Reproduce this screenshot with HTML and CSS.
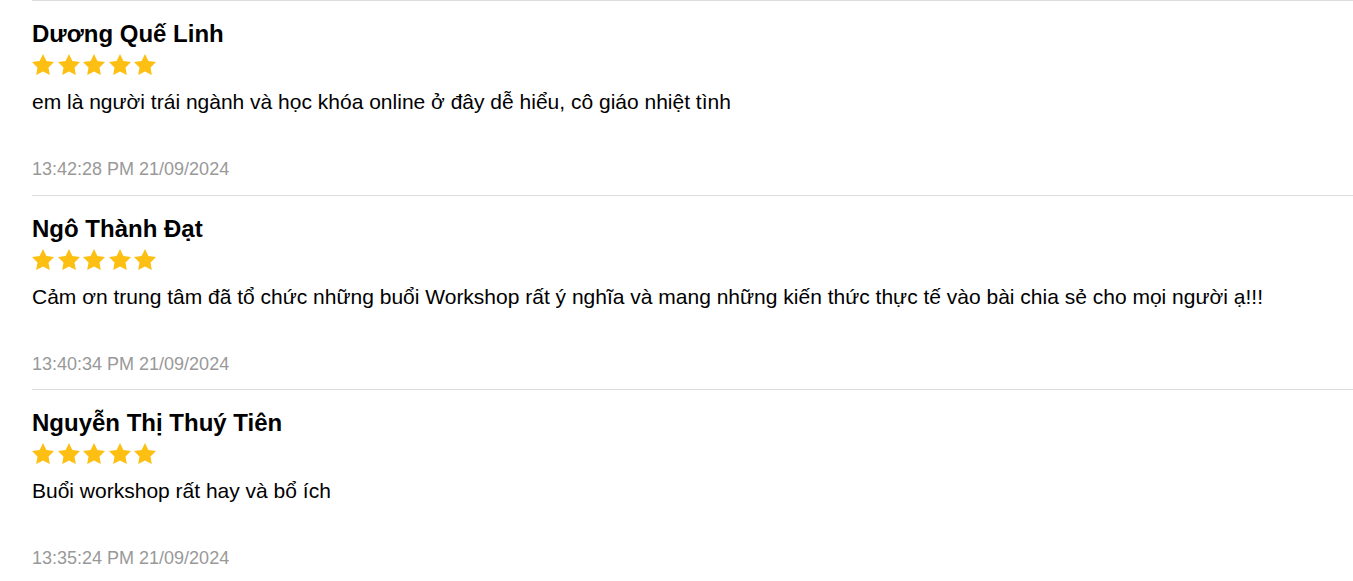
FILE: index.html
```html
<!DOCTYPE html>
<html lang="vi">
<head>
<meta charset="utf-8">
<link rel="stylesheet" href="styles.css">
</head>
<body>
<div class="reviews">
  <div class="review">
    <div class="name">Dương Quế Linh</div>
    <div class="stars">
      <svg class="star" viewBox="2 2 20 19.02" preserveAspectRatio="none"><polygon points="12,2 15.09,8.26 22,9.27 17,14.14 18.18,21.02 12,17.77 5.82,21.02 7,14.14 2,9.27 8.91,8.26"/></svg>
      <svg class="star" viewBox="2 2 20 19.02" preserveAspectRatio="none"><polygon points="12,2 15.09,8.26 22,9.27 17,14.14 18.18,21.02 12,17.77 5.82,21.02 7,14.14 2,9.27 8.91,8.26"/></svg>
      <svg class="star" viewBox="2 2 20 19.02" preserveAspectRatio="none"><polygon points="12,2 15.09,8.26 22,9.27 17,14.14 18.18,21.02 12,17.77 5.82,21.02 7,14.14 2,9.27 8.91,8.26"/></svg>
      <svg class="star" viewBox="2 2 20 19.02" preserveAspectRatio="none"><polygon points="12,2 15.09,8.26 22,9.27 17,14.14 18.18,21.02 12,17.77 5.82,21.02 7,14.14 2,9.27 8.91,8.26"/></svg>
      <svg class="star" viewBox="2 2 20 19.02" preserveAspectRatio="none"><polygon points="12,2 15.09,8.26 22,9.27 17,14.14 18.18,21.02 12,17.77 5.82,21.02 7,14.14 2,9.27 8.91,8.26"/></svg>
    </div>
    <div class="text">em là người trái ngành và học khóa online ở đây dễ hiểu, cô giáo nhiệt tình</div>
    <div class="time">13:42:28 PM 21/09/2024</div>
  </div>
  <div class="review">
    <div class="name">Ngô Thành Đạt</div>
    <div class="stars">
      <svg class="star" viewBox="2 2 20 19.02" preserveAspectRatio="none"><polygon points="12,2 15.09,8.26 22,9.27 17,14.14 18.18,21.02 12,17.77 5.82,21.02 7,14.14 2,9.27 8.91,8.26"/></svg>
      <svg class="star" viewBox="2 2 20 19.02" preserveAspectRatio="none"><polygon points="12,2 15.09,8.26 22,9.27 17,14.14 18.18,21.02 12,17.77 5.82,21.02 7,14.14 2,9.27 8.91,8.26"/></svg>
      <svg class="star" viewBox="2 2 20 19.02" preserveAspectRatio="none"><polygon points="12,2 15.09,8.26 22,9.27 17,14.14 18.18,21.02 12,17.77 5.82,21.02 7,14.14 2,9.27 8.91,8.26"/></svg>
      <svg class="star" viewBox="2 2 20 19.02" preserveAspectRatio="none"><polygon points="12,2 15.09,8.26 22,9.27 17,14.14 18.18,21.02 12,17.77 5.82,21.02 7,14.14 2,9.27 8.91,8.26"/></svg>
      <svg class="star" viewBox="2 2 20 19.02" preserveAspectRatio="none"><polygon points="12,2 15.09,8.26 22,9.27 17,14.14 18.18,21.02 12,17.77 5.82,21.02 7,14.14 2,9.27 8.91,8.26"/></svg>
    </div>
    <div class="text">Cảm ơn trung tâm đã tổ chức những buổi Workshop rất ý nghĩa và mang những kiến thức thực tế vào bài chia sẻ cho mọi người ạ!!!</div>
    <div class="time">13:40:34 PM 21/09/2024</div>
  </div>
  <div class="review">
    <div class="name">Nguyễn Thị Thuý Tiên</div>
    <div class="stars">
      <svg class="star" viewBox="2 2 20 19.02" preserveAspectRatio="none"><polygon points="12,2 15.09,8.26 22,9.27 17,14.14 18.18,21.02 12,17.77 5.82,21.02 7,14.14 2,9.27 8.91,8.26"/></svg>
      <svg class="star" viewBox="2 2 20 19.02" preserveAspectRatio="none"><polygon points="12,2 15.09,8.26 22,9.27 17,14.14 18.18,21.02 12,17.77 5.82,21.02 7,14.14 2,9.27 8.91,8.26"/></svg>
      <svg class="star" viewBox="2 2 20 19.02" preserveAspectRatio="none"><polygon points="12,2 15.09,8.26 22,9.27 17,14.14 18.18,21.02 12,17.77 5.82,21.02 7,14.14 2,9.27 8.91,8.26"/></svg>
      <svg class="star" viewBox="2 2 20 19.02" preserveAspectRatio="none"><polygon points="12,2 15.09,8.26 22,9.27 17,14.14 18.18,21.02 12,17.77 5.82,21.02 7,14.14 2,9.27 8.91,8.26"/></svg>
      <svg class="star" viewBox="2 2 20 19.02" preserveAspectRatio="none"><polygon points="12,2 15.09,8.26 22,9.27 17,14.14 18.18,21.02 12,17.77 5.82,21.02 7,14.14 2,9.27 8.91,8.26"/></svg>
    </div>
    <div class="text">Buổi workshop rất hay và bổ ích</div>
    <div class="time">13:35:24 PM 21/09/2024</div>
  </div>
</div>
</body>
</html>
```
FILE: styles.css
```css
html, body {
  margin: 0;
  padding: 0;
  background: #fff;
}
body {
  font-family: "Liberation Sans", Arial, sans-serif;
  color: #000;
}
.reviews {
  padding-left: 32px;
}
.review {
  border-top: 1px solid #dddddd;
  padding-top: 19px;
  padding-bottom: 14.5px;
}
.name {
  font-size: 24px;
  font-weight: bold;
  line-height: 28px;
}
.stars {
  display: flex;
  gap: 3.5px;
  margin-top: 6px;
  height: 21px;
}
.star {
  display: block;
  width: 22px;
  height: 21px;
  fill: #fcbf12;
}
.text {
  font-size: 21px;
  line-height: 24px;
  margin-top: 15px;
}
.time {
  font-size: 18px;
  line-height: 22px;
  color: #999;
  margin-top: 44px;
}
```
